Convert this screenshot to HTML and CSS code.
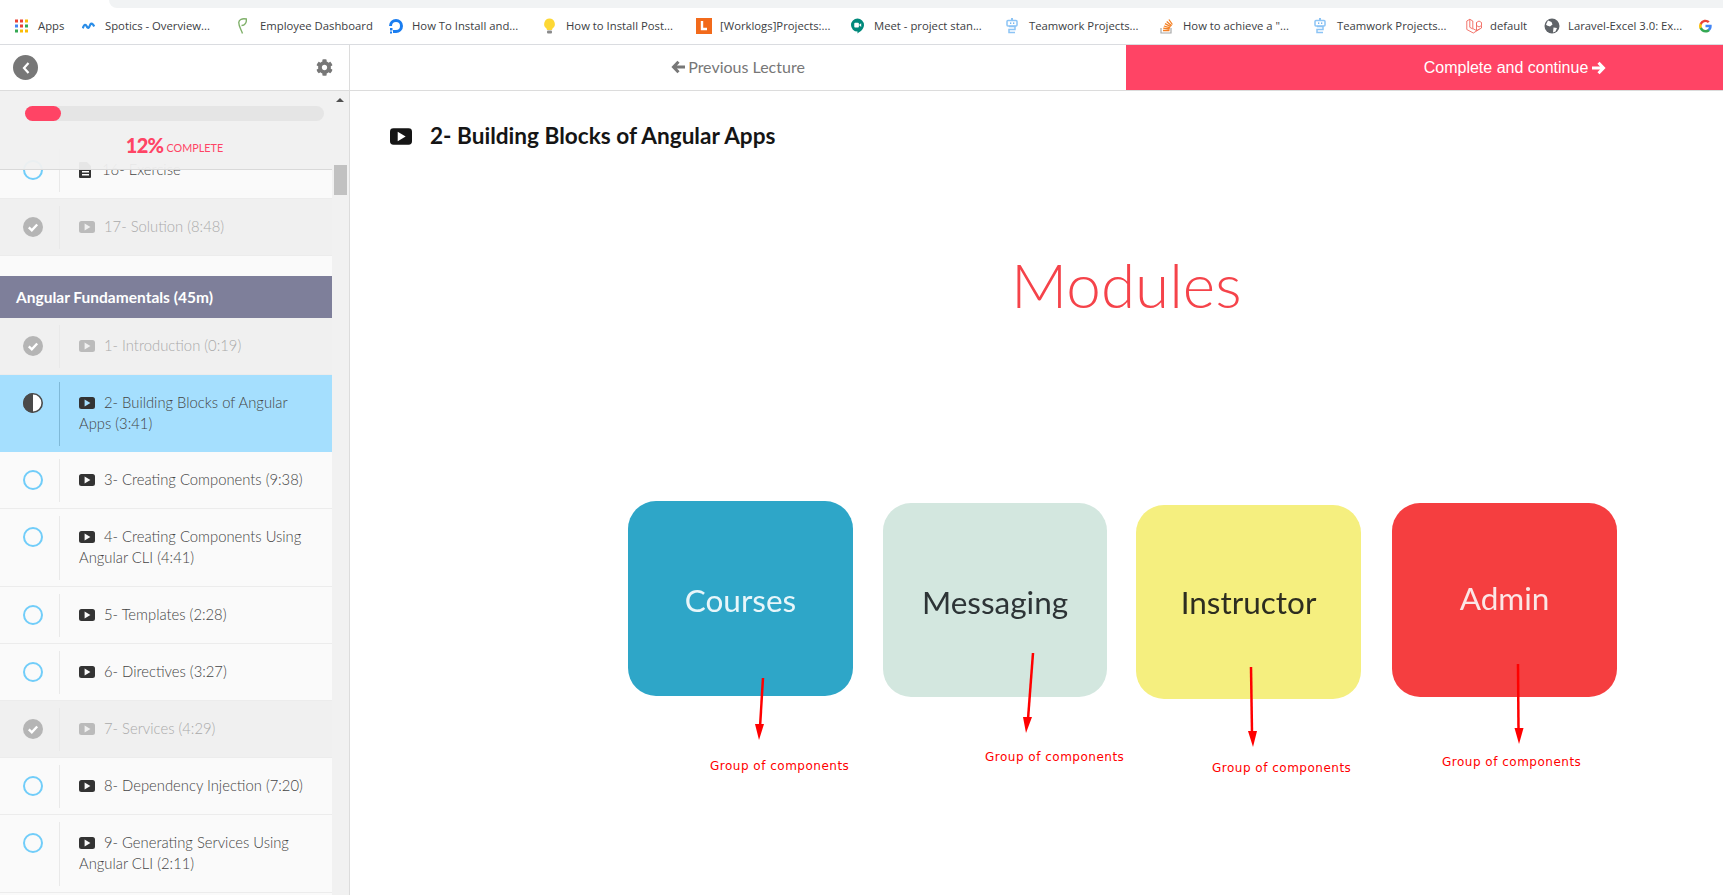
FILE: index.html
```html
<!DOCTYPE html>
<html lang="en">
<head>
<meta charset="utf-8">
<title>2- Building Blocks of Angular Apps</title>
<link rel="stylesheet" href="styles.css">
</head>
<body>
<svg class="sprite" aria-hidden="true">
  <symbol id="video" viewBox="0 0 16 12"><path fill-rule="evenodd" d="M2.5 0h11A2.5 2.5 0 0 1 16 2.5v7a2.5 2.5 0 0 1-2.5 2.5h-11A2.5 2.5 0 0 1 0 9.500v-7A2.500 2.500 0 0 1 2.500 0zM5.600 2.600v6.800L11.400 6z"/></symbol>
  <symbol id="done" viewBox="0 0 20 20"><circle cx="10" cy="10" r="10" fill="#b5b5b5"/><path d="M5.800 10.300l3 3 5.400-5.800" fill="none" stroke="#fff" stroke-width="2.400"/></symbol>
  <symbol id="todo" viewBox="0 0 20 20"><circle cx="10" cy="10" r="9" fill="none" stroke="#71cdf9" stroke-width="2"/></symbol>
  <symbol id="half" viewBox="0 0 20 20"><circle cx="10" cy="10" r="9.200" fill="#fff" stroke="#4a4a4a" stroke-width="1.600"/><path d="M10 0a10 10 0 0 0 0 20z" fill="#4a4a4a"/></symbol>
</svg>

<header class="browser">
  <div class="address-strip"><div class="address-pill"></div></div>
  <nav class="bookmarks">
    <a class="bm"><svg class="bm-icon" viewBox="0 0 13 13"><rect width="3" height="3" fill="#ea4335"/><rect x="5" width="3" height="3" fill="#ea4335"/><rect x="10" width="3" height="3" fill="#fbbc05"/><rect y="5" width="3" height="3" fill="#4285f4"/><rect x="5" y="5" width="3" height="3" fill="#ea4335"/><rect x="10" y="5" width="3" height="3" fill="#34a853"/><rect y="10" width="3" height="3" fill="#34a853"/><rect x="5" y="10" width="3" height="3" fill="#fbbc05"/><rect x="10" y="10" width="3" height="3" fill="#fbbc05"/></svg><span>Apps</span></a>
    <a class="bm"><svg class="bm-icon" viewBox="0 0 14 14"><path d="M0.800 9.500C2.500 4.500 4 5 5.200 7.500S7.500 9 8.700 6s3-1.500 4.500 1.500" fill="none" stroke="#2a8de8" stroke-width="2.400"/></svg><span>Spotics - Overview...</span></a>
    <a class="bm"><svg class="bm-icon bm-narrow" viewBox="0 0 9 16"><path d="M4.500 15.500C3 11 .5 8 .8 4.200 1 1.500 4 .2 8.500 1 8.500 4.500 7 7.500 3.500 7.500" fill="none" stroke="#7fb069" stroke-width="1.400"/></svg><span>Employee Dashboard</span></a>
    <a class="bm"><svg class="bm-icon bm-wide" viewBox="0 0 16 16"><path d="M8 13.500A5.500 5.500 0 1 0 2.500 8" fill="none" stroke="#1a7df0" stroke-width="3"/><rect x="5" y="12" width="3" height="3" fill="#1a7df0"/><rect x="2" y="10" width="2.500" height="2.500" fill="#1a7df0"/><rect x="2" y="13.500" width="2" height="2" fill="#1a7df0"/></svg><span>How To Install and...</span></a>
    <a class="bm"><svg class="bm-icon" viewBox="0 0 13 16"><path d="M6.500.500a5.500 5.500 0 0 0-3 10l.5 1.500h5l.5-1.500a5.500 5.500 0 0 0-3-10z" fill="#fdd835"/><rect x="4" y="12.500" width="5" height="3" rx="1" fill="#8a8a8a"/></svg><span>How to Install Post...</span></a>
    <a class="bm"><svg class="bm-icon bm-wide" viewBox="0 0 16 16"><rect width="16" height="16" fill="#f26a1b"/><path d="M6 3v8h5" fill="none" stroke="#fff" stroke-width="2.400"/></svg><span>[Worklogs]Projects:...</span></a>
    <a class="bm"><svg class="bm-icon" viewBox="0 0 14 16"><path d="M7 0a7 7 0 0 1 7 7c0 4-3.500 7-7 9v-2A7 7 0 0 1 7 0z" fill="#00897b"/><rect x="3.500" y="4.500" width="5" height="5" rx="1" fill="#fff"/><path d="M8.500 7l2.500-2v4z" fill="#fff"/></svg><span>Meet - project stan...</span></a>
    <a class="bm"><svg class="bm-icon bm-robot" viewBox="0 0 12 16"><rect x="5" y="0" width="2" height="2" fill="#8cc4f5"/><rect x="1" y="2.500" width="10" height="5.500" rx="1" fill="none" stroke="#8cc4f5" stroke-width="1.500"/><rect x="4" y="4.500" width="1.300" height="1.300" fill="#5aa7ea"/><rect x="7" y="4.500" width="1.300" height="1.300" fill="#5aa7ea"/><path d="M3 8.500h6v3H3v3h6" fill="none" stroke="#8cc4f5" stroke-width="1.500"/></svg><span>Teamwork Projects...</span></a>
    <a class="bm"><svg class="bm-icon" viewBox="0 0 13 16"><path d="M1 10v5h10v-5" fill="none" stroke="#a8a8a8" stroke-width="1.200"/><path d="M3 12.500h6.500M3.200 10.200l6.400.8M3.900 8l6.200 1.800M5 5.700l5.700 3M6.700 3.500l4.900 4.200M8.900 1.500l3.500 5" fill="none" stroke="#f48024" stroke-width="1.300"/></svg><span>How to achieve a "...</span></a>
    <a class="bm"><svg class="bm-icon bm-robot" viewBox="0 0 12 16"><rect x="5" y="0" width="2" height="2" fill="#8cc4f5"/><rect x="1" y="2.500" width="10" height="5.500" rx="1" fill="none" stroke="#8cc4f5" stroke-width="1.500"/><rect x="4" y="4.500" width="1.300" height="1.300" fill="#5aa7ea"/><rect x="7" y="4.500" width="1.300" height="1.300" fill="#5aa7ea"/><path d="M3 8.500h6v3H3v3h6" fill="none" stroke="#8cc4f5" stroke-width="1.500"/></svg><span>Teamwork Projects...</span></a>
    <a class="bm"><svg class="bm-icon bm-wide" viewBox="0 0 16 16"><path d="M.8 3l3-1.700 3 1.700v7.500l3.800 2.200 3-1.700M.8 3v8.500l6.500 3.500 3.300-2M3.800 1.300v8l3 1.700M10.500 4.500l2.500-1.500 2.500 1.500v3L13 9l-2.500-1.500zM10.500 4.500v8M15.500 7.500v2.500L10.600 12.800" fill="none" stroke="#f2665c" stroke-width=".9"/></svg><span>default</span></a>
    <a class="bm"><svg class="bm-icon bm-wide" viewBox="0 0 16 16"><circle cx="8" cy="8" r="7.500" fill="#5f6368"/><path d="M4 2.500l3.500 1.500 1 2.500-2.500 2-3-1-1-1zM9.500 9.500l3.500 .5-1.500 3.500-2.500 1z" fill="#fff"/></svg><span>Laravel-Excel 3.0: Ex...</span></a>
    <a class="bm"><svg class="bm-icon" viewBox="0 0 13 13"><path d="M12.700 6.600c0-.5 0-.9-.1-1.300H6.500v2.500H10c-.2.800-.6 1.500-1.300 1.900v1.600h2.100c1.200-1.100 1.900-2.800 1.900-4.700z" fill="#4285f4"/><path d="M6.500 13c1.800 0 3.200-.6 4.300-1.600L8.700 9.800c-.6.400-1.300.6-2.200.6-1.700 0-3.100-1.100-3.600-2.700H.7v1.600A6.500 6.500 0 0 0 6.500 13z" fill="#34a853"/><path d="M2.900 7.700a3.900 3.900 0 0 1 0-2.500V3.700H.7a6.500 6.500 0 0 0 0 5.600z" fill="#fbbc05"/><path d="M6.500 2.600c.9 0 1.800.3 2.400.9l1.800-1.800A6.500 6.500 0 0 0 .7 3.700l2.200 1.600c.5-1.600 1.900-2.700 3.600-2.700z" fill="#ea4335"/></svg></a>
  </nav>
</header>

<div class="app">
  <aside class="sidebar">
    <div class="side-head">
      <button class="back" type="button" aria-label="Back"><svg viewBox="0 0 10 14" class="back-icon"><path d="M7.500 2L3 7l4.500 5" fill="none" stroke="#fff" stroke-width="2.200"/></svg></button>
      <svg class="gear" viewBox="0 0 512 512"><path fill="#777" d="M487.400 315.700l-42.600-24.600c4.300-23.200 4.300-47 0-70.200l42.600-24.600c4.900-2.800 7.100-8.600 5.500-14-11.100-35.600-30-67.800-54.700-94.600-3.800-4.100-10-5.100-14.800-2.300L380.800 110c-17.900-15.400-38.500-27.300-60.800-35.100V25.800c0-5.600-3.900-10.500-9.400-11.700-36.700-8.200-74.300-7.800-109.200 0-5.500 1.200-9.400 6.100-9.400 11.700V75c-22.200 7.900-42.800 19.800-60.800 35.100L88.700 85.500c-4.900-2.800-11-1.900-14.800 2.300-24.700 26.700-43.600 58.900-54.700 94.600-1.700 5.400.6 11.200 5.500 14L67.300 221c-4.300 23.200-4.300 47 0 70.200l-42.600 24.600c-4.900 2.800-7.100 8.600-5.500 14 11.100 35.600 30 67.800 54.700 94.600 3.800 4.100 10 5.100 14.800 2.300l42.600-24.600c17.900 15.400 38.500 27.300 60.800 35.100v49.200c0 5.600 3.900 10.500 9.400 11.700 36.700 8.200 74.300 7.800 109.200 0 5.500-1.200 9.400-6.100 9.400-11.700v-49.200c22.200-7.900 42.800-19.800 60.800-35.100l42.600 24.600c4.900 2.800 11 1.900 14.800-2.300 24.700-26.700 43.600-58.900 54.700-94.600 1.500-5.500-.7-11.300-5.600-14.100zM256 336c-44.100 0-80-35.900-80-80s35.900-80 80-80 80 35.900 80 80-35.900 80-80 80z"/></svg>
    </div>
    <div class="side-body">
      <div class="list-area">
        <div class="progress-panel">
          <div class="bar"><div class="bar-fill"></div></div>
          <div class="percent"><b>12%</b> <span>COMPLETE</span></div>
        </div>
        <div class="lessons">
          <div class="row">
            <div class="status"><svg class="status-icon"><use href="#todo"/></svg></div>
            <div class="row-text"><svg class="type doc" viewBox="0 0 13 16"><path d="M1 0h7l4 4v11a1 1 0 0 1-1 1H1a1 1 0 0 1-1-1V1a1 1 0 0 1 1-1z" fill="#333"/><rect x="3" y="9" width="7" height="1.500" fill="#fff"/><rect x="3" y="12" width="7" height="1.500" fill="#fff"/></svg>16- Exercise</div>
          </div>
          <div class="row done">
            <div class="status"><svg class="status-icon"><use href="#done"/></svg></div>
            <div class="row-text"><svg class="type"><use href="#video"/></svg>17- Solution (8:48)</div>
          </div>
          <h3 class="section">Angular Fundamentals (45m)</h3>
          <div class="row done">
            <div class="status"><svg class="status-icon"><use href="#done"/></svg></div>
            <div class="row-text"><svg class="type"><use href="#video"/></svg>1- Introduction (0:19)</div>
          </div>
          <div class="row active">
            <div class="status"><svg class="status-icon"><use href="#half"/></svg></div>
            <div class="row-text"><svg class="type"><use href="#video"/></svg>2- Building Blocks of Angular Apps (3:41)</div>
          </div>
          <div class="row">
            <div class="status"><svg class="status-icon"><use href="#todo"/></svg></div>
            <div class="row-text"><svg class="type"><use href="#video"/></svg>3- Creating Components (9:38)</div>
          </div>
          <div class="row">
            <div class="status"><svg class="status-icon"><use href="#todo"/></svg></div>
            <div class="row-text"><svg class="type"><use href="#video"/></svg>4- Creating Components Using Angular CLI (4:41)</div>
          </div>
          <div class="row">
            <div class="status"><svg class="status-icon"><use href="#todo"/></svg></div>
            <div class="row-text"><svg class="type"><use href="#video"/></svg>5- Templates (2:28)</div>
          </div>
          <div class="row">
            <div class="status"><svg class="status-icon"><use href="#todo"/></svg></div>
            <div class="row-text"><svg class="type"><use href="#video"/></svg>6- Directives (3:27)</div>
          </div>
          <div class="row done">
            <div class="status"><svg class="status-icon"><use href="#done"/></svg></div>
            <div class="row-text"><svg class="type"><use href="#video"/></svg>7- Services (4:29)</div>
          </div>
          <div class="row">
            <div class="status"><svg class="status-icon"><use href="#todo"/></svg></div>
            <div class="row-text"><svg class="type"><use href="#video"/></svg>8- Dependency Injection (7:20)</div>
          </div>
          <div class="row">
            <div class="status"><svg class="status-icon"><use href="#todo"/></svg></div>
            <div class="row-text"><svg class="type"><use href="#video"/></svg>9- Generating Services Using Angular CLI (2:11)</div>
          </div>
        </div>
      </div>
      <div class="scrollbar">
        <div class="scroll-arrow"></div>
        <div class="scroll-thumb"></div>
      </div>
    </div>
  </aside>

  <main class="main">
    <div class="topbar">
      <a class="prev"><svg class="arrow-icon" viewBox="0 0 14 14"><path d="M7.500 1.800L2.500 7l5 5.200M3 7h11" fill="none" stroke="#777" stroke-width="3"/></svg>Previous Lecture</a>
      <a class="next">Complete and continue<svg class="arrow-icon" viewBox="0 0 14 14"><path d="M6.500 1.800L11.500 7l-5 5.200M0 7h11" fill="none" stroke="#fff" stroke-width="3"/></svg></a>
    </div>
    <div class="content">
      <h2 class="title"><svg class="title-icon"><use href="#video"/></svg>2- Building Blocks of Angular Apps</h2>
      <div class="slide-word">Modules</div>
      <div class="card card-courses">Courses</div>
      <div class="card card-messaging">Messaging</div>
      <div class="card card-instructor">Instructor</div>
      <div class="card card-admin">Admin</div>
      <svg class="arrows" viewBox="0 0 1373 804">
        <g class="arrow-lines">
          <line x1="413" y1="587" x2="410" y2="636"/>
          <line x1="683" y1="562" x2="678" y2="628"/>
          <line x1="901" y1="576" x2="902" y2="642"/>
          <line x1="1168" y1="573" x2="1168.500" y2="639"/>
        </g>
        <g class="arrow-heads">
          <polygon points="405,633 414,633 409,649"/>
          <polygon points="673,626 682,626 676,642"/>
          <polygon points="898,640 907,640 903,656"/>
          <polygon points="1164.500,637 1173.500,637 1169,653"/>
        </g>
      </svg>
      <div class="note note-courses">Group of components</div>
      <div class="note note-messaging">Group of components</div>
      <div class="note note-instructor">Group of components</div>
      <div class="note note-admin">Group of components</div>
    </div>
  </main>
</div>
</body>
</html>
```
FILE: styles.css
```css
* { box-sizing: border-box; }
html, body { margin: 0; height: 100%; }
body {
  display: flex;
  flex-direction: column;
  height: 895px;
  overflow: hidden;
  background: #fff;
  font-family: "Lato", "Liberation Sans", sans-serif;
  color: #555;
}
.sprite { position: absolute; width: 0; height: 0; }

/* browser chrome */
.browser { flex: none; height: 45px; background: #fff; border-bottom: 1px solid #dadce0; }
.address-strip { height: 8px; padding-left: 109px; }
.address-pill { height: 8px; background: #f1f3f4; border-radius: 0 0 0 14px; }
.bookmarks {
  display: grid;
  grid-template-columns: 67px 156px 150px 155px 153px 155px 155px 154px 154px 152px 78px 155px 24px;
  height: 36px;
  padding: 0 0 0 15px;
  align-items: center;
  overflow: hidden;
}
.bm {
  display: flex;
  align-items: center;
  gap: 10px;
  font-family: "Open Sans", "Liberation Sans", sans-serif;
  font-size: 11.3px;
  color: #3c4043;
  white-space: nowrap;
}
.bm span { position: relative; top: -1px; }
.bm-icon { flex: none; width: 13px; height: 16px; }
.bm-narrow { width: 9px; margin-right: 3px; }
.bm-wide { width: 16px; height: 16px; margin-right: -2px; }
.bm-robot { width: 12px; margin-right: 1px; }

/* layout */
.app { flex: 1; display: flex; min-height: 0; }
.sidebar {
  flex: none;
  width: 350px;
  display: flex;
  flex-direction: column;
  border-right: 1px solid #dcdcdc;
  min-height: 0;
}
.side-head {
  flex: none;
  height: 46px;
  display: flex;
  align-items: center;
  justify-content: space-between;
  padding: 0 16px 0 13px;
  background: #fff;
  border-bottom: 1px solid #dcdcdc;
}
.back {
  width: 25px; height: 25px;
  padding: 0; border: 0;
  border-radius: 50%;
  background: #777;
  display: flex; align-items: center; justify-content: center;
}
.back-icon { width: 10px; height: 14px; }
.gear { width: 17px; height: 17px; }

.side-body { flex: 1; display: flex; min-height: 0; }
.list-area { position: relative; width: 332px; overflow: hidden; background: #fafafa; }
.progress-panel {
  position: absolute;
  top: 0; left: 0; right: 0;
  z-index: 2;
  height: 79px;
  padding: 15px 8px 0 25px;
  background: rgba(240, 240, 240, .95);
  border-bottom: 1px solid #d9d9d9;
}
.bar { height: 15px; border-radius: 8px; background: #e5e5e5; }
.bar-fill { width: 36px; height: 15px; border-radius: 8px; background: #ff4465; }
.percent {
  margin-top: 11px;
  text-align: center;
  color: #ff4465;
  line-height: 26px;
}
.percent b { font-size: 20px; font-weight: 900; letter-spacing: -.7px; }
.percent span { position: relative; top: -1px; font-size: 10.8px; margin-left: -1px; }

.lessons { padding-top: 51px; }
.row {
  display: flex;
  background: #fafafa;
  border-bottom: 1px solid #ececec;
  padding: 7px 0 6px;
  font-size: 14.8px;
  font-weight: 300;
  line-height: 21px;
  color: #444;
}
.status {
  flex: none;
  width: 60px;
  padding: 11px 0 0 23px;
  border-right: 1px solid #e9e9e9;
}
.status-icon { display: block; width: 20px; height: 20px; }
.row-text { flex: 1; padding: 10px 22px 12px 19px; }
.type {
  width: 16px; height: 12px;
  fill: #333;
  margin-right: 9px;
  vertical-align: -1px;
}
.type.doc { height: 16px; width: 13px; margin-right: 10px; vertical-align: -3px; }
.done { background: #f0f0f0; color: #aaa; }
.done .type { fill: #bbb; }
.active { background: #a5dffe; border-bottom: 0; }
.active .status { border-right-color: #7fb9d8; }
.section {
  margin: 20px 0 0;
  height: 42px;
  padding: 0 16px;
  background: #7e7f9a;
  color: #fff;
  font-size: 15.5px;
  font-weight: 700;
  line-height: 42px;
}

.scrollbar { position: relative; flex: 1; background: #f1f1f1; }
.scroll-arrow {
  position: absolute;
  top: 7px; left: 4px;
  border: 4px solid transparent;
  border-top: 0;
  border-bottom: 4px solid #505050;
}
.scroll-thumb {
  position: absolute;
  top: 74px; left: 2px;
  width: 13px; height: 30px;
  background: #c1c1c1;
}

/* main */
.main { flex: 1; display: flex; flex-direction: column; min-width: 0; }
.topbar { flex: none; height: 46px; display: flex; border-bottom: 1px solid #dcdcdc; }
.prev, .next {
  display: flex;
  align-items: center;
  justify-content: center;
  font-size: 16px;
}
.prev { flex: 1; gap: 3px; color: #777; padding: 0 0 2px 0; }
.next {
  flex: none;
  width: 597px;
  gap: 4px;
  color: #fff;
  background: #ff4465;
  font-family: "Liberation Sans", sans-serif;
  font-size: 16px;
  padding-left: 181px;
}
.arrow-icon { width: 14px; height: 14px; }
.content { position: relative; flex: 1; background: #fff; }
.title {
  display: flex;
  align-items: center;
  gap: 18px;
  margin: 0;
  padding: 32px 0 0 40px;
  font-size: 22.6px;
  line-height: 26px;
  font-weight: 700;
  color: #151515;
}
.title-icon { width: 22px; height: 17px; fill: #151515; }

.slide-word {
  position: absolute;
  left: 661px; top: 148px;
  font-family: "Lato", sans-serif;
  font-weight: 300;
  font-size: 62px;
  line-height: 90px;
  color: #f5434a;
}
.card {
  position: absolute;
  display: flex;
  align-items: center;
  justify-content: center;
  border-radius: 28px;
  font-family: "Lato", sans-serif;
  font-size: 31.5px;
  filter: blur(.4px);
}
.card-courses { left: 278px; top: 410px; width: 225px; height: 195px; padding-top: 2px; background: #2ea6c8; color: #e8f6fa; }
.card-messaging { left: 533px; top: 412px; width: 224px; height: 194px; padding-top: 4px; background: #d3e7df; color: #2d3436; }
.card-instructor { left: 786px; top: 414px; width: 225px; height: 194px; background: #f5ef7f; color: #2d2d20; }
.card-admin { left: 1042px; top: 412px; width: 225px; height: 194px; padding-bottom: 4px; background: #f53e40; color: #fbe6e6; }

.arrows { position: absolute; left: 0; top: 0; width: 1373px; height: 804px; }
.arrow-lines line { stroke: #f00; stroke-width: 2.5; }
.arrow-heads polygon { fill: #f00; }
.note {
  position: absolute;
  font-family: "DejaVu Sans", sans-serif;
  font-size: 12px;
  line-height: 16px;
  letter-spacing: .5px;
  color: #f00;
  white-space: nowrap;
}
.note-courses { left: 360px; top: 667px; }
.note-messaging { left: 635px; top: 658px; }
.note-instructor { left: 862px; top: 669px; }
.note-admin { left: 1092px; top: 663px; }
```
